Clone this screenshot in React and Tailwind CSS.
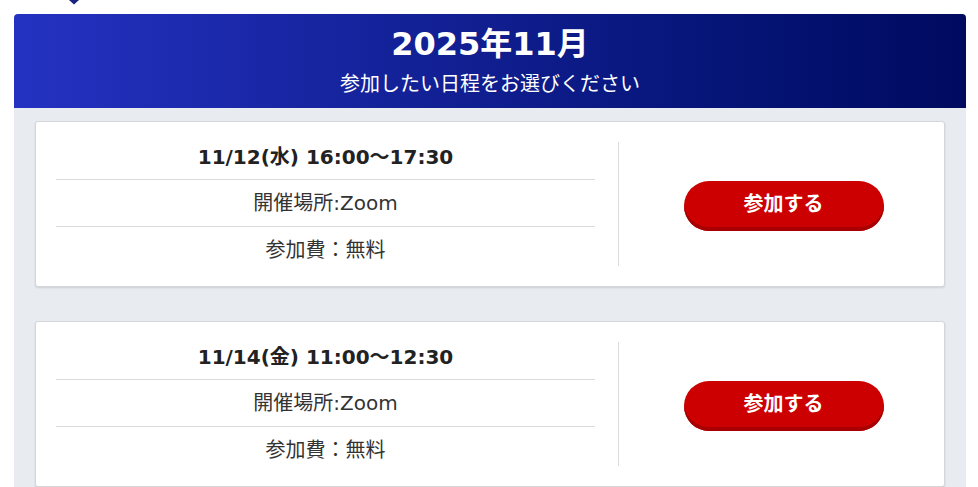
const events = [
  { date: "11/12(水) 16:00〜17:30" },
  { date: "11/14(金) 11:00〜12:30" },
];

const font = { fontFamily: '"DejaVu Sans", "Noto Sans CJK JP", sans-serif' };

function EventCard({ date }) {
  return (
    <div className="flex h-[166px] shrink-0 rounded-[3px] border border-[#d4d6d8] bg-white shadow-[0_1px_2px_rgba(0,0,0,0.12)]">
      <div className="ml-[20px] flex w-[539px] flex-col pt-[20px]">
        <div className="flex h-[38px] justify-center border-b border-[#dadada] text-[20px] font-bold leading-[30px] text-[#222]">
          {date}
        </div>
        <div className="flex h-[47px] items-center justify-center border-b border-[#dadada] text-[20px] text-[#333]">
          開催場所:Zoom
        </div>
        <div className="flex h-[40px] items-center justify-center pt-[6px] text-[20px] text-[#333]">
          参加費：無料
        </div>
      </div>
      <div className="ml-[23px] mt-[20px] h-[124px] w-px bg-[#dcdcdc]" />
      <div className="flex flex-1 items-center justify-center pl-[4px] pt-[4px]">
        <button className="flex h-[50px] w-[200px] items-center justify-center rounded-full bg-[#cc0000] pb-[4px] text-[20px] font-bold text-white shadow-[inset_0_-4px_0_#a80000]">
          参加する
        </button>
      </div>
    </div>
  );
}

export default function App() {
  return (
    <div className="h-[487px] w-full overflow-hidden bg-white" style={font}>
      <div className="h-[14px]">
        <svg className="ml-[69px]" width="10" height="5" viewBox="0 0 10 5">
          <path d="M0 0 L10 0 L5 4.5 Z" fill="#1a237e" />
        </svg>
      </div>
      <div className="ml-[14px] w-[952px]">
        <div className="flex h-[94px] flex-col items-center rounded-t-[4px] bg-gradient-to-r from-[#2432c2] to-[#000a5f] text-white">
          <div className="mt-[10px] text-[32px] font-bold leading-[40px]">2025年11月</div>
          <div className="mt-[6px] text-[20px] leading-[28px]">参加したい日程をお選びください</div>
        </div>
        <div className="flex flex-col gap-[34px] bg-[#e8ecf0] px-[21px] pt-[13px] pb-[20px]">
          {events.map((e) => (
            <EventCard key={e.date} date={e.date} />
          ))}
        </div>
      </div>
    </div>
  );
}
